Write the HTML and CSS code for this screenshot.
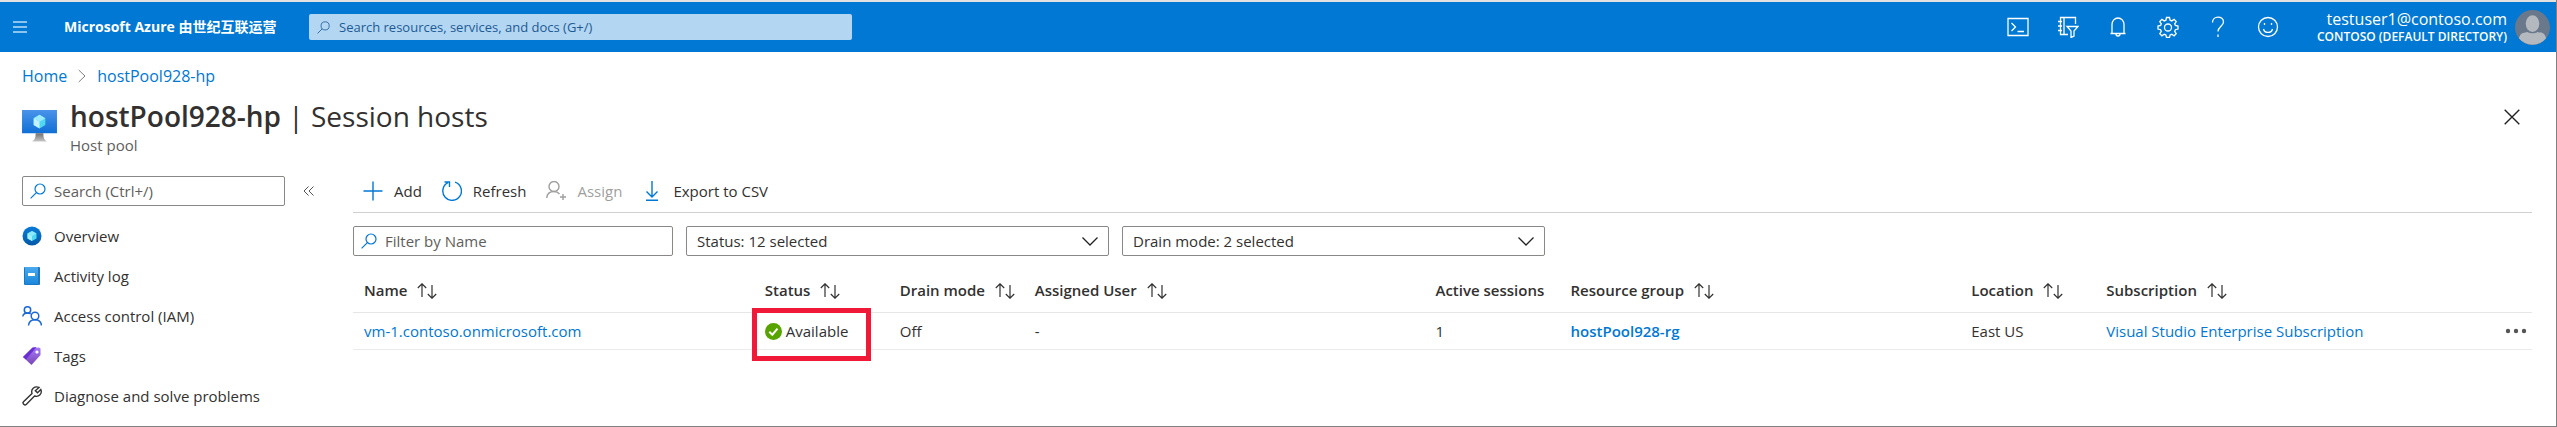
FILE: index.html
```html
<!DOCTYPE html>
<html lang="en">
<head>
<meta charset="utf-8">
<title>hostPool928-hp | Session hosts</title>
<link rel="stylesheet" href="styles.css">
</head>
<body>
<svg class="defs" aria-hidden="true">
  <defs>
    <symbol id="search" viewBox="0 0 16 16"><circle cx="10" cy="6" r="5"/><path d="M6.4 9.6 .6 15.4"/></symbol>
    <symbol id="sort" viewBox="0 0 20 16"><path d="M5 14V1M.8 5 5 .8 9.200 5M15 2v13M10.800 11l4.200 4.200L19.200 11"/></symbol>
    <linearGradient id="screen" x2="0" y2="1"><stop offset="0" stop-color="#4a93ea"/><stop offset="1" stop-color="#0f6fd6"/></linearGradient>
    <linearGradient id="stand" x2="0" y2="1"><stop offset="0" stop-color="#707070"/><stop offset="1" stop-color="#c8c8c8"/></linearGradient>
    <linearGradient id="disc" x2="0" y2="1"><stop offset="0" stop-color="#0a7bd8"/><stop offset="1" stop-color="#0458a8"/></linearGradient>
    <linearGradient id="book" x2="0" y2="1"><stop offset="0" stop-color="#4ba9ee"/><stop offset="1" stop-color="#1b87dc"/></linearGradient>
    <linearGradient id="tag" x2="0" y2="1"><stop offset="0" stop-color="#a67af4"/><stop offset="1" stop-color="#7a45b8"/></linearGradient>
  </defs>
</svg>
<div class="portal">
  <header class="topbar">
    <button class="menu" aria-label="Show portal menu"><svg width="14" height="12" viewBox="0 0 14 12"><path d="M0 1h14M0 6h14M0 11h14"/></svg></button>
    <a class="brand" href="#">Microsoft Azure 由世纪互联运营</a>
    <label class="global-search"><svg width="13" height="13"><use href="#search"/></svg><input type="text" aria-label="Search resources" placeholder="Search resources, services, and docs (G+/)"></label>
    <nav class="tools">
      <button aria-label="Cloud Shell"><svg viewBox="0 0 22 22"><path d="M1 2.500h20v17H1zM4.500 7l4 4-4 4M10.500 15.500H17"/></svg></button>
      <button aria-label="Directories"><svg viewBox="0 0 22 22"><path d="M11 18.500H3.500v-17h15V8M7 1.500v17M1 5.500h4M1 10h4M1 14.500h4M10 10.500h11l-4 4.500v5l-3 1.500V15z"/></svg></button>
      <button aria-label="Notifications"><svg viewBox="0 0 22 22"><path d="M3.500 17.500h15M5 17V8.500a6 6.500 0 0 1 12 0V17M9 18a2 2 0 0 0 4 0"/></svg></button>
      <button aria-label="Settings"><svg viewBox="0 0 22 22"><path d="M9.500 1.500h3l.6 2.700 1.700.7 2.300-1.500 2.100 2.100-1.500 2.300.7 1.700 2.600.6v3l-2.600.6-.7 1.700 1.500 2.300-2.100 2.100-2.300-1.500-1.700.7-.6 2.500h-3l-.6-2.500-1.700-.7-2.300 1.500-2.100-2.100 1.500-2.300-.7-1.700L1 13.100v-3l2.600-.6.7-1.700-1.500-2.300 2.100-2.100 2.300 1.500 1.700-.7z"/><circle cx="11" cy="11.500" r="3.500"/></svg></button>
      <button aria-label="Help"><svg viewBox="0 0 22 22"><path d="M5.500 6.500C5.500-.5 16.500-.5 16.500 6c0 4-5.500 4.500-5.500 9.500M11 18.500V21"/></svg></button>
      <button aria-label="Feedback"><svg viewBox="0 0 22 22"><circle cx="11" cy="11" r="9.500"/><path d="M6.500 13c1 4.500 8 4.500 9 0M7.500 7v2M14.500 7v2"/></svg></button>
    </nav>
    <button class="account">
      <span class="who"><span class="user">testuser1@contoso.com</span><span class="directory">CONTOSO (DEFAULT DIRECTORY)</span></span>
      <svg class="avatar" viewBox="0 0 36 36"><circle cx="18" cy="18" r="18" fill="#69788a"/><ellipse cx="18" cy="14" rx="7" ry="8.500" fill="#b3b9be"/><path d="M4 29c2-7 6-5.500 9-6.500 3 2 7 2 10 0 3 1 7-.5 9 6.500a18 18 0 0 1-28 0z" fill="#b3b9be"/></svg>
    </button>
  </header>

  <nav class="crumbs" aria-label="Breadcrumb">
    <a href="#">Home</a>
    <svg width="8" height="14" viewBox="0 0 8 14"><path d="M.7 1 7 7 .7 13"/></svg>
    <a href="#">hostPool928-hp</a>
  </nav>

  <div class="heading">
    <svg class="host-icon" viewBox="0 0 36 34"><path d="M0 0h36v24H0z" fill="url(#screen)"/><path d="M14 24h8c0 5 1 7 4 8.500H10c3-1.500 4-3.500 4-8.500z" fill="url(#stand)"/><path d="m18 5 6 3.500v7L18 19l-6-3.500v-7z" fill="#50d8f3"/><path d="m18 5 6 3.500-6 3.500-6-3.500z" fill="#9cebff"/><path d="m12 8.500 6 3.500v7l-6-3.500z" fill="#c3f1ff"/></svg>
    <div class="titles">
      <h1>hostPool928-hp <span>| Session hosts</span></h1>
      <p>Host pool</p>
    </div>
    <button class="close" aria-label="Close"><svg width="16" height="16" viewBox="0 0 16 16"><path d="m.7.7 14.600 14.600M15.300.7.700 15.300"/></svg></button>
  </div>

  <div class="body">
    <aside class="side">
      <div class="side-top">
        <label class="field"><svg width="16" height="16"><use href="#search"/></svg><input type="text" aria-label="Search menu" placeholder="Search (Ctrl+/)"></label>
        <button class="collapse" aria-label="Collapse menu"><svg width="10" height="10" viewBox="0 0 10 10"><path d="M4.500.5 0 5l4.500 4.500M9.500.5 5 5l4.500 4.500"/></svg></button>
      </div>
      <nav class="links">
        <a href="#"><svg viewBox="0 0 20 20"><circle cx="10" cy="10" r="9.500" fill="url(#disc)"/><path d="m10 5 4.500 2.500v5L10 15l-4.500-2.500v-5z" fill="#50d8f3"/><path d="m10 5 4.500 2.500L10 10 5.500 7.500z" fill="#8ce8fb"/><path d="M5.500 7.500 10 10v5l-4.500-2.500z" fill="#a8edfb"/></svg>Overview</a>
        <a href="#"><svg viewBox="0 0 20 20"><rect x="2" y="1" width="16" height="18" rx="1" fill="#1a78c2"/><rect x="3" y="1" width="13" height="17" fill="url(#book)"/><path d="M6 7h7v3H6z" fill="#fff"/></svg>Activity log</a>
        <a href="#"><svg viewBox="0 0 20 20" fill="none" stroke="#1a66d6" stroke-width="1.500"><circle cx="5.500" cy="4" r="3.200"/><circle cx="13" cy="10" r="3.800"/><path d="M.8 10.500c.4-2.500 2.400-3.500 4.700-3.500 1.300 0 2.300.3 3.200 1M6.500 19.500c.5-4 3-5.700 6.500-5.700s6 1.700 6.500 5.700"/></svg>Access control (IAM)</a>
        <a href="#"><svg viewBox="0 0 20 20"><path d="M10.500 2 17 1.500l1.500 1V9L9.500 19 1 11z" fill="url(#tag)"/><path d="m1 11 9.500-9.500 4-.5L4 13.500z" fill="#6a2fd0"/><circle cx="15" cy="6" r="1.600" fill="#fff"/></svg>Tags</a>
        <a href="#"><svg viewBox="0 0 20 20" fill="none" stroke="#333" stroke-width="1.400"><path d="M17 1.500c-4-2-8.500 1.500-7 6L1.500 15.800c-1.500 1.500 1.200 4.200 2.700 2.700l8.300-8.500c4.500 1.500 8-2.500 6.300-6.500L15.500 6.700 13.300 4.700z"/></svg>Diagnose and solve problems</a>
      </nav>
    </aside>

    <main class="content">
      <div class="commands">
        <button><svg viewBox="0 0 20 20"><path d="M10 .5v19M.5 10h19"/></svg>Add</button>
        <button><svg viewBox="0 0 20 20"><path d="M13 1.200A9.300 9.300 0 1 1 6 1.700M2.500 1h5v5"/></svg>Refresh</button>
        <button disabled><svg viewBox="0 0 20 20"><circle cx="8" cy="5.500" r="5"/><path d="M.7 17c.4-4 3.300-6.500 7.300-6.500 2.300 0 4.300 1 5.500 2.500M17 13v6M14 16h6"/></svg>Assign</button>
        <button><svg viewBox="0 0 20 20"><path d="M10 0v16M4.500 10.500 10 16l5.500-5.500M4 19.300h12"/></svg>Export to CSV</button>
      </div>
      <div class="filters">
        <label class="field name-filter"><svg width="16" height="16"><use href="#search"/></svg><input type="text" aria-label="Filter by name" placeholder="Filter by Name"></label>
        <select aria-label="Status"><option>Status: 12 selected</option></select>
        <select aria-label="Drain mode"><option>Drain mode: 2 selected</option></select>
      </div>
      <table>
        <colgroup><col><col class="narrow"><col class="narrow"><col><col class="narrow"><col><col class="narrow"><col><col class="more"></colgroup>
        <thead><tr>
          <th>Name <svg><use href="#sort"/></svg></th><th>Status <svg><use href="#sort"/></svg></th><th>Drain mode <svg><use href="#sort"/></svg></th><th>Assigned User <svg><use href="#sort"/></svg></th><th>Active sessions</th><th>Resource group <svg><use href="#sort"/></svg></th><th>Location <svg><use href="#sort"/></svg></th><th>Subscription <svg><use href="#sort"/></svg></th><th></th>
        </tr></thead>
        <tbody><tr>
          <td><a href="#">vm-1.contoso.onmicrosoft.com</a></td>
          <td class="status"><span class="state"><svg width="17" height="17" viewBox="0 0 17 17"><circle cx="8.500" cy="8.500" r="8.500" fill="#57a300"/><path d="m4.300 8.800 3 2.900 5.200-6" fill="none" stroke="#fff" stroke-width="2"/></svg>Available</span><span class="callout"></span></td>
          <td>Off</td><td>-</td><td>1</td>
          <td><a class="strong" href="#">hostPool928-rg</a></td>
          <td>East US</td>
          <td><a href="#">Visual Studio Enterprise Subscription</a></td>
          <td class="actions"><button aria-label="More actions"><svg width="22" height="6" viewBox="0 0 22 6"><circle cx="3" cy="3" r="2.200"/><circle cx="11" cy="3" r="2.200"/><circle cx="19" cy="3" r="2.200"/></svg></button></td>
        </tr></tbody>
      </table>
    </main>
  </div>
</div>
</body>
</html>
```
FILE: styles.css
```css
* { box-sizing: border-box; }
body {
  margin: 0;
  color: #323130;
  background: #fff;
  font: 15px/20px "Open Sans", "Noto Sans", "Noto Sans CJK SC", sans-serif;
}
a { color: #0078d4; text-decoration: none; }
button { border: 0; padding: 0; background: none; color: inherit; font: inherit; }
svg { flex: none; display: block; }
input { border: 0; padding: 0; outline: 0; background: none; font: inherit; color: inherit; flex: 1; min-width: 0; }
.defs { position: absolute; width: 0; height: 0; }
.portal { min-height: 100vh; border: solid #808080; border-width: 0 1px 1px 0; }

.topbar {
  display: flex;
  align-items: center;
  height: 52px;
  padding: 0 6px 0 13px;
  background: #0078d4;
  color: #fff;
  border-top: 2px solid #e1e1e1;
}
.topbar svg { fill: none; stroke: #fff; }
.menu svg { stroke: #8cc4f0; stroke-width: 2; }
.brand { width: 245px; margin-left: 37px; color: #fff; font-size: 14px; font-weight: 700; white-space: nowrap; }
.global-search {
  display: flex;
  align-items: center;
  gap: 9px;
  width: 543px;
  height: 26px;
  padding: 0 8px;
  border-radius: 2px;
  background: #b3d6f2;
  color: #1d5a94;
  font-size: 13px;
}
.global-search svg { stroke: #1d5a94; stroke-width: 1; }
.global-search input::placeholder { color: #1d5a94; opacity: 1; }
.tools { display: flex; margin-left: auto; }
.tools button { width: 50px; display: flex; justify-content: center; }
.tools svg { width: 22px; height: 22px; stroke-width: 1.300; }
.account { display: flex; align-items: center; gap: 8px; margin-left: 18px; text-align: right; }
.who { display: block; min-width: 196px; }
.user, .directory { display: block; white-space: nowrap; }
.user { font-size: 16px; line-height: 20px; }
.directory { font-size: 12px; line-height: 16px; font-weight: 600; }
.topbar .avatar { width: 35px; height: 35px; stroke: none; }

.crumbs { display: flex; align-items: center; gap: 11px; height: 47px; padding-left: 22px; font-size: 16px; }
.crumbs svg { fill: none; stroke: #808080; }

.heading { display: flex; align-items: flex-start; height: 77px; padding: 0 36px 0 22px; }
.host-icon { width: 35px; height: 33px; margin: 11px 13px 0 0; }
h1 { margin: 0; font-size: 28px; line-height: 34px; font-weight: 600; }
h1 span { font-weight: 400; }
.titles p { margin: 2px 0 0; color: #605e5c; }
.close { margin: 10px 0 0 auto; }
.close svg { stroke: #222; stroke-width: 1.400; }

.body { display: flex; padding-right: 24px; }
.side { width: 353px; padding-left: 22px; flex: none; }
.side-top { display: flex; align-items: center; gap: 19px; }
.field {
  display: flex;
  align-items: center;
  gap: 8px;
  height: 30px;
  padding: 0 7px;
  border: 1px solid #8a8886;
  border-radius: 2px;
}
.side .field { width: 263px; }
.field svg { fill: none; stroke: #0078d4; stroke-width: 1.200; }
.field input::placeholder { color: #605e5c; opacity: 1; }
.collapse svg { fill: none; stroke: #555; }
.links { display: flex; flex-direction: column; padding-top: 10px; }
.links a { display: flex; align-items: center; gap: 12px; height: 40px; color: #323130; }
.links svg { width: 20px; height: 20px; }

.content { flex: 1; min-width: 0; }
.commands { display: flex; gap: 20px; height: 37px; padding: 0 0 7px 10px; border-bottom: 1px solid #d2d0ce; }
.commands button { display: flex; align-items: center; gap: 11px; }
.commands svg { width: 20px; height: 20px; fill: none; stroke: #0078d4; stroke-width: 1.400; }
.commands button:disabled { color: #a19f9d; }
.commands button:disabled svg { stroke: #a19f9d; }
.filters { display: flex; gap: 13px; padding-top: 13px; }
.name-filter { width: 320px; }
select {
  appearance: none;
  width: 423px;
  height: 30px;
  padding: 0 10px;
  border: 1px solid #8a8886;
  border-radius: 2px;
  color: #323130;
  font: inherit;
  background: #fff url("data:image/svg+xml,%3Csvg xmlns='http://www.w3.org/2000/svg' width='16' height='9'%3E%3Cpath d='M.5.5 8 8 15.500.5' fill='none' stroke='%23222' stroke-width='1.300'/%3E%3C/svg%3E") no-repeat right 10px center;
}

table { width: 100%; margin-top: 13px; table-layout: fixed; border-collapse: separate; border-spacing: 0; }
.narrow { width: 135px; }
.more { width: 36px; }
th, td { padding: 0 0 0 11px; text-align: left; white-space: nowrap; }
th { height: 44px; padding-bottom: 2px; border-bottom: 1px solid #e6e6e6; font-weight: 600; }
th svg { display: inline-block; width: 20px; height: 16px; margin-left: 6px; vertical-align: -3px; fill: none; stroke: #323130; stroke-width: 1.200; }
td { height: 37px; border-bottom: 1px solid #edebe9; }
.strong { font-weight: 600; }
.status { position: relative; }
.state { display: flex; align-items: center; gap: 4px; }
.callout { position: absolute; left: -2px; top: -5px; width: 119px; height: 53px; border: 5px solid #f01937; }
.actions { padding: 0 5px 0 0; }
.actions button { display: block; margin-left: auto; }
.actions svg { fill: #555; }
```
